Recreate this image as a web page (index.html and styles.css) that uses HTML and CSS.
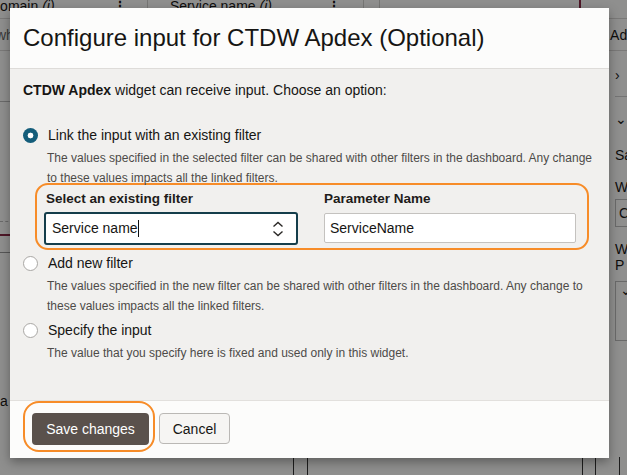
FILE: index.html
```html
<!DOCTYPE html>
<html lang="en">
<head>
<meta charset="utf-8">
<title>Configure input</title>
<link rel="stylesheet" href="styles.css">
</head>
<body>
<div class="page">
  <div class="bg">
    <div class="bg-top">
      <div class="bg-cell c1"><span class="cut">Domain <i>(i)</i></span><span class="kebab">⋮</span></div>
      <div class="bg-cell c2"><span>Service name <i>(i)</i></span><span class="kebab">⋮</span></div>
      <div class="bg-cell c3"></div>
      <div class="bg-cell c4"></div>
      <div class="bg-cell c5"></div>
    </div>
    <div class="bg-row2">
      <span class="wh">wh</span>
      <span class="add">Add</span>
    </div>
    <div class="bg-main">
      <div class="bg-left">
        <div class="bl l1"></div>
        <div class="bl l2"></div>
        <div class="bl l3"></div>
        <div class="bl l4"></div>
        <div class="bg-af">a f</div>
      </div>
      <div class="bg-right">
        <div class="br-item">›</div>
        <div class="br-item down">⌄</div>
        <div class="br-text sa">Sa</div>
        <div class="br-text w1">W</div>
        <div class="br-box">C</div>
        <div class="br-text w2">W</div>
        <div class="br-text p">P</div>
        <div class="br-box2">⌄</div>
      </div>
    </div>
    <div class="bg-bottom">
      <span class="vl v1"></span><span class="vl v2"></span><span class="vl v3"></span><span class="vl v4"></span><span class="vl v5"></span>
    </div>
  </div>
  <div class="overlay"></div>

  <div class="dialog">
    <div class="dlg-header">
      <h1 class="dlg-title">Configure input for CTDW Apdex (Optional)</h1>
    </div>
    <div class="dlg-body">
      <p class="intro"><b>CTDW Apdex</b> widget can receive input. Choose an option:</p>

      <div class="option first">
        <div class="radio-row">
          <span class="radio checked"></span>
          <span class="radio-label">Link the input with an existing filter</span>
        </div>
        <p class="desc">The values specified in the selected filter can be shared with other filters in the dashboard. Any change to these values impacts all the linked filters.</p>
      </div>

      <div class="fields">
        <div class="field f-left">
          <label class="field-label">Select an existing filter</label>
          <div class="select">
            <span class="select-text">Service name<span class="caret"></span></span>
            <svg class="updown" width="14" height="18" viewBox="0 0 14 18"><path d="M2.5 6.5 L7 2.5 L11.5 6.5" fill="none" stroke="#2a2826" stroke-width="1.4"/><path d="M2.5 11.5 L7 15.5 L11.5 11.5" fill="none" stroke="#2a2826" stroke-width="1.4"/></svg>
          </div>
        </div>
        <div class="field f-right">
          <label class="field-label">Parameter Name</label>
          <div class="input">ServiceName</div>
        </div>
      </div>

      <div class="option">
        <div class="radio-row">
          <span class="radio"></span>
          <span class="radio-label">Add new filter</span>
        </div>
        <p class="desc">The values specified in the new filter can be shared with other filters in the dashboard. Any change to these values impacts all the linked filters.</p>
      </div>

      <div class="option">
        <div class="radio-row">
          <span class="radio"></span>
          <span class="radio-label">Specify the input</span>
        </div>
        <p class="desc">The value that you specify here is fixed and used only in this widget.</p>
      </div>
    </div>
    <div class="dlg-footer">
      <div class="ring"><button class="btn primary">Save changes</button></div>
      <button class="btn secondary">Cancel</button>
    </div>
  </div>
</div>
</body>
</html>
```

FILE: styles.css
```css
* { box-sizing: border-box; }
html, body { margin: 0; padding: 0; }
body {
  font-family: "Liberation Sans", Arial, sans-serif;
  color: #161513;
  background: #fbfbfa;
}
.page {
  position: relative;
  width: 627px;
  height: 475px;
  overflow: hidden;
}

/* ---------- background page ---------- */
.bg {
  display: flex;
  flex-direction: column;
  height: 475px;
  background: #fbfbfa;
  font-size: 14px;
  color: #1a1816;
}
.bg-top {
  display: flex;
  height: 19px;
  border-bottom: 1px solid #d6d5d3;
}
.bg-cell {
  display: flex;
  align-items: flex-start;
  justify-content: space-between;
  line-height: 12px;
  border-right: 1px solid #d0cfcd;
}
.bg-cell i { font-style: italic; }
.c1 { width: 148px; padding-right: 20px; }
.c1 .cut { margin-left: -10px; }
.c2 { width: 216px; padding-left: 22px; padding-right: 22px; }
.c3 { width: 16px; }
.c4 { width: 201px; border-right: 2px solid #8a2a45; }
.c5 { flex: 1; border-right: none; }
.kebab { font-weight: bold; }
.bg-row2 {
  display: flex;
  justify-content: space-between;
  height: 32px;
  align-items: center;
  border-bottom: 1px solid #d6d5d3;
}
.wh { margin-left: -4px; color: #666; }
.add { margin-right: -8px; }
.bg-main { display: flex; flex: 1; }
.bg-left { width: 24px; display: flex; flex-direction: column; }
.bl { height: 0; }
.l1 { margin-top: 50px; border-top: 1px solid #bbb; }
.l2 { margin-top: 119px; border-top: 1px dashed #bbb; }
.l3 { margin-top: 12px; border-top: 2px solid #8a2a45; }
.l4 { margin-top: 16px; border-top: 1px solid #999; }
.bg-af { margin-top: 140px; font-size: 14px; }
.bg-right {
  margin-left: auto;
  width: 12px;
  display: flex;
  flex-direction: column;
  font-size: 14px;
}
.br-item { height: 46px; line-height: 48px; border-bottom: 1px solid #ccc; }
.br-item.down { border-bottom: none; line-height: 44px; }
.br-text { line-height: 16px; }
.sa { margin-top: 4px; }
.w1 { margin-top: 16px; }
.br-box { margin-top: 4px; height: 28px; border: 1px solid #bbb; border-right: none; padding-left: 3px; line-height: 26px; }
.w2 { margin-top: 14px; }
.br-box2 { margin-top: 8px; height: 60px; border: 1px solid #bbb; border-right: none; padding-left: 4px; }
.bg-bottom { display: flex; height: 18px; margin-top: auto; }
.vl { display: block; width: 1px; height: 18px; background: #333; }
.v1 { margin-left: 293px; }
.v2 { margin-left: 13px; }
.v3 { margin-left: 274px; }
.v4 { margin-left: 12px; }
.v5 { margin-left: 23px; }

.overlay {
  position: absolute;
  inset: 0;
  background: rgba(0, 0, 0, 0.43);
}

/* ---------- dialog ---------- */
.dialog {
  position: absolute;
  left: 10px;
  top: 8px;
  width: 599px;
  height: 450px;
  display: flex;
  flex-direction: column;
  background: #f1f0ee;
  box-shadow: 0 4px 10px rgba(0, 0, 0, 0.35);
}
.dlg-header {
  height: 61px;
  background: #fcfcfb;
  border-bottom: 1px solid #dedcd9;
  padding: 15px 13px 0;
}
.dlg-title {
  margin: 0;
  font-size: 24px;
  font-weight: normal;
  line-height: 30px;
  color: #161513;
}
.dlg-body {
  flex: 1;
  padding: 11px 13px 0;
}
.intro {
  margin: 0;
  font-size: 14px;
  line-height: 20px;
}
.option { margin-top: 0; }
.option.first { margin-top: 25px; }
.radio-row {
  display: flex;
  align-items: center;
  height: 20px;
}
.radio {
  width: 15px;
  height: 15px;
  border-radius: 50%;
  border: 1px solid #a9a7a4;
  background: #fff;
  margin-right: 10px;
  flex: none;
}
.radio.checked {
  border: none;
  background: radial-gradient(circle, #fff 0 2.6px, #145d7a 3.2px);
}
.radio-label { font-size: 14px; }
.desc {
  margin: 3px 0 0 24px;
  font-size: 12px;
  line-height: 20px;
  color: #4d4b48;
}
.option + .option { margin-top: 4px; }

.fields {
  display: flex;
  gap: 26px;
  margin: -5px 7px 3px 12px;
  padding: 6px 11px 3px 7px;
  border: 2px solid #f78c28;
  border-radius: 13px;
  align-items: flex-end;
}
.field { display: flex; flex-direction: column; }
.f-left { width: 254px; }
.f-left .field-label { margin-left: 2px; }
.f-right { flex: 1; padding-bottom: 2px; }
.field-label {
  font-size: 13.5px;
  font-weight: bold;
  line-height: 16px;
  color: #1e1c1a;
  margin-bottom: 5px;
}
.f-right .field-label { margin-bottom: 6px; }
.select {
  height: 33px;
  border: 2px solid #153e4b;
  border-radius: 3px;
  background: #fff;
  display: flex;
  align-items: center;
  justify-content: space-between;
  padding: 0 11px 0 6px;
  font-size: 14px;
}
.caret {
  display: inline-block;
  width: 1px;
  height: 17px;
  background: #111;
  vertical-align: -4px;
}
.input {
  height: 30px;
  border: 1px solid #c4c2bf;
  border-radius: 2px;
  background: #fff;
  font-size: 14px;
  line-height: 28px;
  padding-left: 5px;
}

.dlg-footer {
  height: 58px;
  background: #fcfcfb;
  border-top: 1px solid #e2e0dd;
  display: flex;
  align-items: flex-start;
  padding-left: 13px;
  gap: 4px;
}
.ring {
  padding: 10px 4px 5px 7px;
  border: 2px solid #f78c28;
  border-radius: 16px;
}
.btn {
  font-family: "Liberation Sans", Arial, sans-serif;
  font-size: 14px;
  height: 32px;
  border-radius: 4px;
  cursor: pointer;
}
.primary {
  width: 117px;
  background: #5a514c;
  color: #fff;
  border: none;
  display: block;
}
.secondary {
  margin-top: 12px;
  width: 71px;
  height: 31px;
  background: #f6f5f3;
  color: #161513;
  border: 1px solid #bab8b5;
}
```
